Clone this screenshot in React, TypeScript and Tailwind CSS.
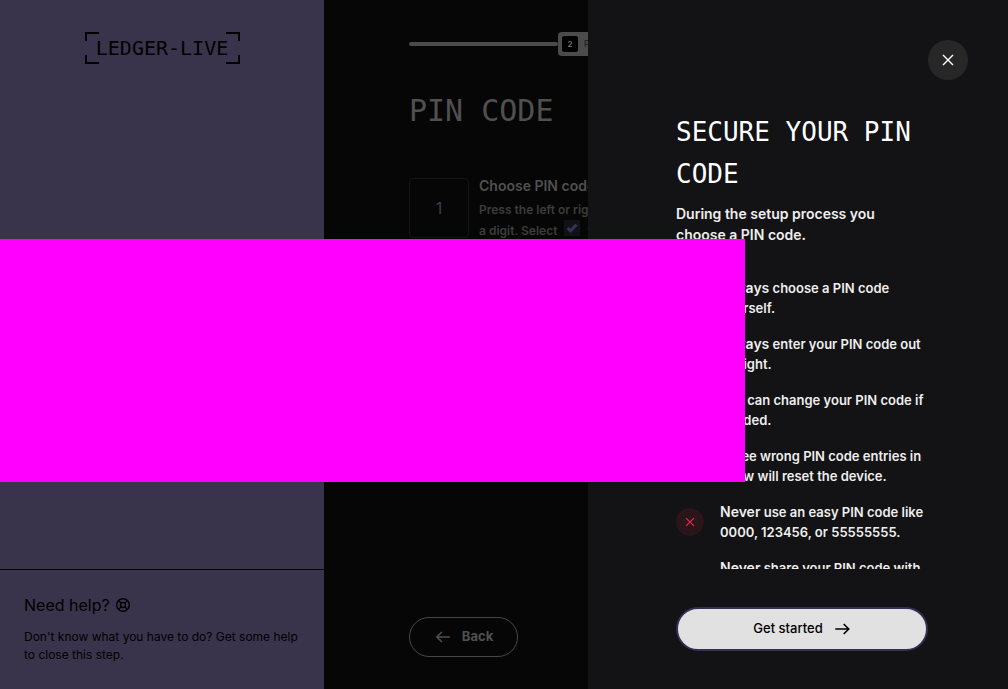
import type { ReactNode } from "react";

type Rule = { ok: boolean; lead?: string; text: string };

const rules: Rule[] = [
  { ok: true, lead: "Always", text: " choose a PIN code yourself." },
  { ok: true, lead: "Always", text: " enter your PIN code out of sight." },
  { ok: true, text: "You can change your PIN code if needed." },
  { ok: true, text: "Three wrong PIN code entries in a row will reset the device." },
  { ok: false, lead: "Never", text: " use an easy PIN code like 0000, 123456, or 55555555." },
  { ok: false, lead: "Never", text: " share your PIN code with someone else. Not even with Ledger." },
];

function Icon({ size, children }: { size: number; children: ReactNode }) {
  return (
    <svg width={size} height={size} viewBox="0 0 16 16" fill="none" stroke="currentColor" strokeWidth="1.4" aria-hidden="true">
      {children}
    </svg>
  );
}

function Logo() {
  return (
    <div className="relative flex h-8 w-[155px] items-center justify-center font-['DejaVu_Sans_Mono',monospace] text-xl leading-8">
      <svg className="absolute inset-0" width="155" height="32" fill="none" stroke="black" strokeWidth="2" aria-hidden="true">
        <path d="M1 9V1H14M141 1H154V9M154 23V31H141M14 31H1V23" />
      </svg>
      LEDGER-LIVE
    </div>
  );
}

function Sidebar() {
  return (
    <aside className="flex w-[324px] shrink-0 flex-col justify-between bg-[#39344b] text-black">
      <div className="flex justify-center pt-8">
        <Logo />
      </div>
      <section className="border-t border-black px-6 pt-6 pb-[25px]">
        <h2 className="flex items-center gap-[5px] text-base leading-[22px]">
          Need help?
          <Icon size={16}>
            <circle cx="8" cy="8" r="6.3" />
            <circle cx="8" cy="8" r="2.5" />
            <path d="M3.6 3.6L6.2 6.2M12.4 3.6L9.8 6.2M3.6 12.4L6.2 9.8M12.4 12.4L9.8 9.8" />
          </Icon>
        </h2>
        <p className="mt-3 text-xs leading-[18px]">
          Don't know what you have to do? Get some help to close this step.
        </p>
      </section>
    </aside>
  );
}

function SetupStep() {
  return (
    <main className="flex min-w-0 flex-1 flex-col overflow-hidden bg-[#060606] pt-8 pb-8 pl-[85px] text-[#505050]">
      <div className="flex items-center">
        <div className="h-1 w-[149px] shrink-0 rounded-full bg-[#4b4b4b]" />
        <div className="flex h-6 shrink-0 items-center gap-1.5 rounded bg-[#4b4b4b] pr-3 pl-1">
          <span className="flex size-4 items-center justify-center rounded-xs bg-black text-[8px] font-semibold text-[#777777]">2</span>
          <span className="text-[9px] font-medium text-[#1c1a18]">PIN code</span>
        </div>
      </div>
      <h1 className="mt-[34px] font-['DejaVu_Sans_Mono',monospace] text-[30px] leading-[42px]">PIN CODE</h1>
      <div className="mt-[46px] flex gap-2.5">
        <div className="flex size-[60px] shrink-0 items-center justify-center rounded border border-[#141414] text-base text-[#403d50]">1</div>
        <div className="w-[236px] shrink-0">
          <h2 className="text-sm leading-4 font-semibold">Choose PIN code</h2>
          <p className="mt-1.5 text-xs leading-5 font-semibold text-[#3c3c3c]">
            Press the left or right button to choose a&nbsp;digit. Select{" "}
            <span className="mx-1 mb-0.5 inline-flex size-4 items-center justify-center bg-[#121118] align-text-bottom text-[#39344f]">
              <svg width="12" height="12" viewBox="0 0 12 12" fill="none" stroke="currentColor" strokeWidth="3" aria-hidden="true">
                <path d="M1.5 6L4.5 8.7L10.5 2.8" />
              </svg>
            </span>{" "}
            to confirm.
          </p>
        </div>
      </div>
      <button type="button" className="mt-auto flex h-10 w-[109px] items-center justify-center gap-2.5 rounded-full border border-[#464646] text-[13px] font-bold">
        <Icon size={18}>
          <path d="M14 8H2.5M7 3.5L2.5 8L7 12.5" />
        </Icon>
        Back
      </button>
    </main>
  );
}

function RuleRow({ rule }: { rule: Rule }) {
  return (
    <li className="flex items-center gap-4">
      <span className={rule.ok ? "flex size-7 shrink-0 items-center justify-center rounded-full bg-[#17251b] text-[#6eb260]" : "flex size-7 shrink-0 items-center justify-center rounded-full bg-[#29151a] text-[#e22d4e]"}>
        <Icon size={14}>
          {rule.ok ? <path d="M3 8.5L6.5 12L13 4.5" /> : <path d="M3.5 3.5L12.5 12.5M12.5 3.5L3.5 12.5" />}
        </Icon>
      </span>
      <p className="text-[13px] leading-5 font-semibold">
        {rule.lead && <strong className="text-sm leading-5 font-semibold">{rule.lead}</strong>}
        {rule.text}
      </p>
    </li>
  );
}

function Drawer() {
  return (
    <div role="dialog" aria-labelledby="drawer-title" className="absolute inset-y-0 right-0 flex w-[420px] flex-col bg-[#131214] text-[#eeeeee]">
      <div className="flex justify-end px-10 pt-10">
        <button type="button" aria-label="Close" className="flex size-10 items-center justify-center rounded-full bg-[#272727] text-white">
          <Icon size={16}>
            <path d="M3 3L13 13M13 3L3 13" />
          </Icon>
        </button>
      </div>
      <div className="mt-[31px] min-h-0 flex-1 overflow-hidden pr-20 pl-[88px]">
        <h2 id="drawer-title" className="font-['DejaVu_Sans_Mono',monospace] text-[26px] leading-[42px] text-white">SECURE YOUR PIN CODE</h2>
        <p className="mt-2 text-sm leading-[21px] font-semibold">During the setup process you choose a PIN code.</p>
        <ul className="mt-[33px] flex flex-col gap-4">
          {rules.map((rule, i) => (
            <RuleRow key={i} rule={rule} />
          ))}
        </ul>
      </div>
      <div className="pt-[38px] pr-20 pb-[38px] pl-[88px]">
        <button type="button" className="flex h-11 w-full items-center justify-center gap-2.5 rounded-full border-2 border-[#342f55] bg-[#e1e1e1] text-[13px] font-medium text-black">
          Get started
          <Icon size={18}>
            <path d="M2 8H14M9.5 3.5L14 8L9.5 12.5" />
          </Icon>
        </button>
      </div>
    </div>
  );
}

export default function App() {
  return (
    <div className="relative flex h-screen overflow-hidden bg-[#060606] font-[Inter,sans-serif]">
      <Sidebar />
      <SetupStep />
      <Drawer />
      <div className="absolute top-[239px] left-0 h-[243px] w-[745px] bg-[#ff00ff]" />
    </div>
  );
}
